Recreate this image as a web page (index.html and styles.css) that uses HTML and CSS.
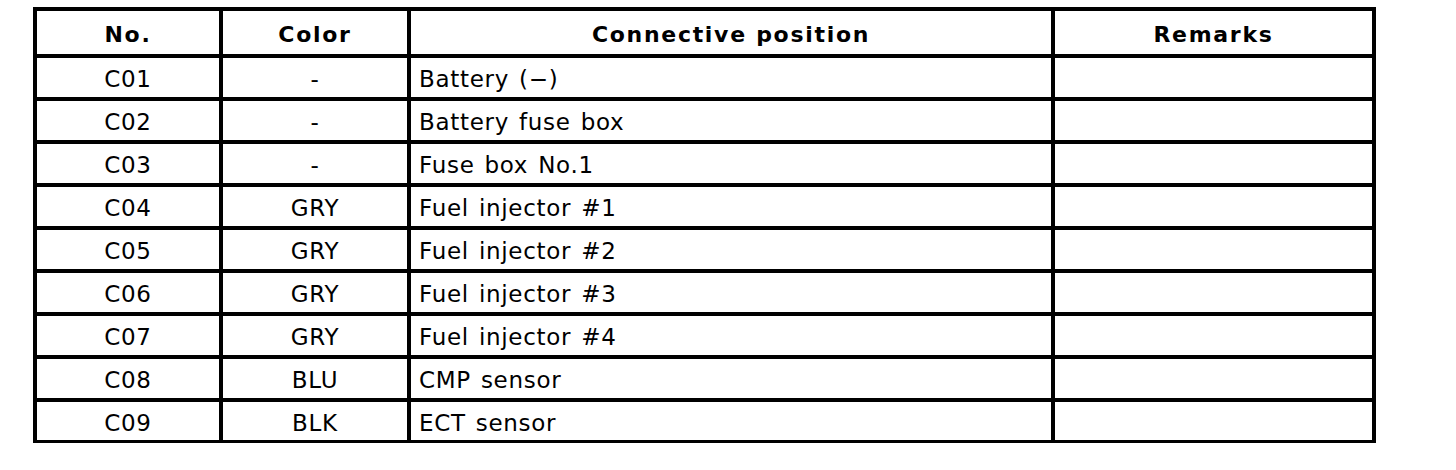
FILE: index.html
```html
<!DOCTYPE html>
<html>
<head>
<meta charset="utf-8">
<link rel="stylesheet" href="styles.css">
</head>
<body>
<table class="conn">
  <colgroup>
    <col class="c-no"><col class="c-color"><col class="c-pos"><col class="c-rem">
  </colgroup>
  <thead>
    <tr><th>No.</th><th>Color</th><th>Connective position</th><th>Remarks</th></tr>
  </thead>
  <tbody>
    <tr><td class="ctr">C01</td><td class="ctr">-</td><td class="pos">Battery (&minus;)</td><td></td></tr>
    <tr><td class="ctr">C02</td><td class="ctr">-</td><td class="pos">Battery fuse box</td><td></td></tr>
    <tr><td class="ctr">C03</td><td class="ctr">-</td><td class="pos">Fuse box No.1</td><td></td></tr>
    <tr><td class="ctr">C04</td><td class="ctr">GRY</td><td class="pos">Fuel injector #1</td><td></td></tr>
    <tr><td class="ctr">C05</td><td class="ctr">GRY</td><td class="pos">Fuel injector #2</td><td></td></tr>
    <tr><td class="ctr">C06</td><td class="ctr">GRY</td><td class="pos">Fuel injector #3</td><td></td></tr>
    <tr><td class="ctr">C07</td><td class="ctr">GRY</td><td class="pos">Fuel injector #4</td><td></td></tr>
    <tr><td class="ctr">C08</td><td class="ctr">BLU</td><td class="pos">CMP sensor</td><td></td></tr>
    <tr class="last"><td class="ctr">C09</td><td class="ctr">BLK</td><td class="pos">ECT sensor</td><td></td></tr>
  </tbody>
</table>
</body>
</html>
```
FILE: styles.css
```css
html, body {
  margin: 0;
  padding: 0;
  background: #fff;
}
body {
  padding: 7px 0 0 33px;
  font-family: "DejaVu Sans", Verdana, sans-serif;
  color: #000;
}
.conn {
  border-collapse: separate;
  border-spacing: 0;
  table-layout: fixed;
  width: 1343px;
  border-top: 4px solid #000;
  border-left: 4px solid #000;
}
.c-no { width: 186px; }
.c-color { width: 188px; }
.c-pos { width: 644px; }
.c-rem { width: 321px; }
.conn th, .conn td {
  border-right: 4px solid #000;
  border-bottom: 4px solid #000;
  padding: 0;
  vertical-align: middle;
  box-sizing: border-box;
  line-height: 1.2;
}
.conn th {
  height: 47px;
  font-weight: bold;
  font-size: 22px;
  letter-spacing: 1.7px;
  text-align: center;
  padding-top: 5px;
}
.conn td {
  height: 43px;
  font-size: 23px;
  letter-spacing: 0.7px;
  word-spacing: 2px;
  padding-top: 5px;
}
.conn tr.last td {
  height: 41px;
  border-bottom-width: 3px;
}
.ctr { text-align: center; }
.pos { text-align: left; padding-left: 8px !important; }
```
